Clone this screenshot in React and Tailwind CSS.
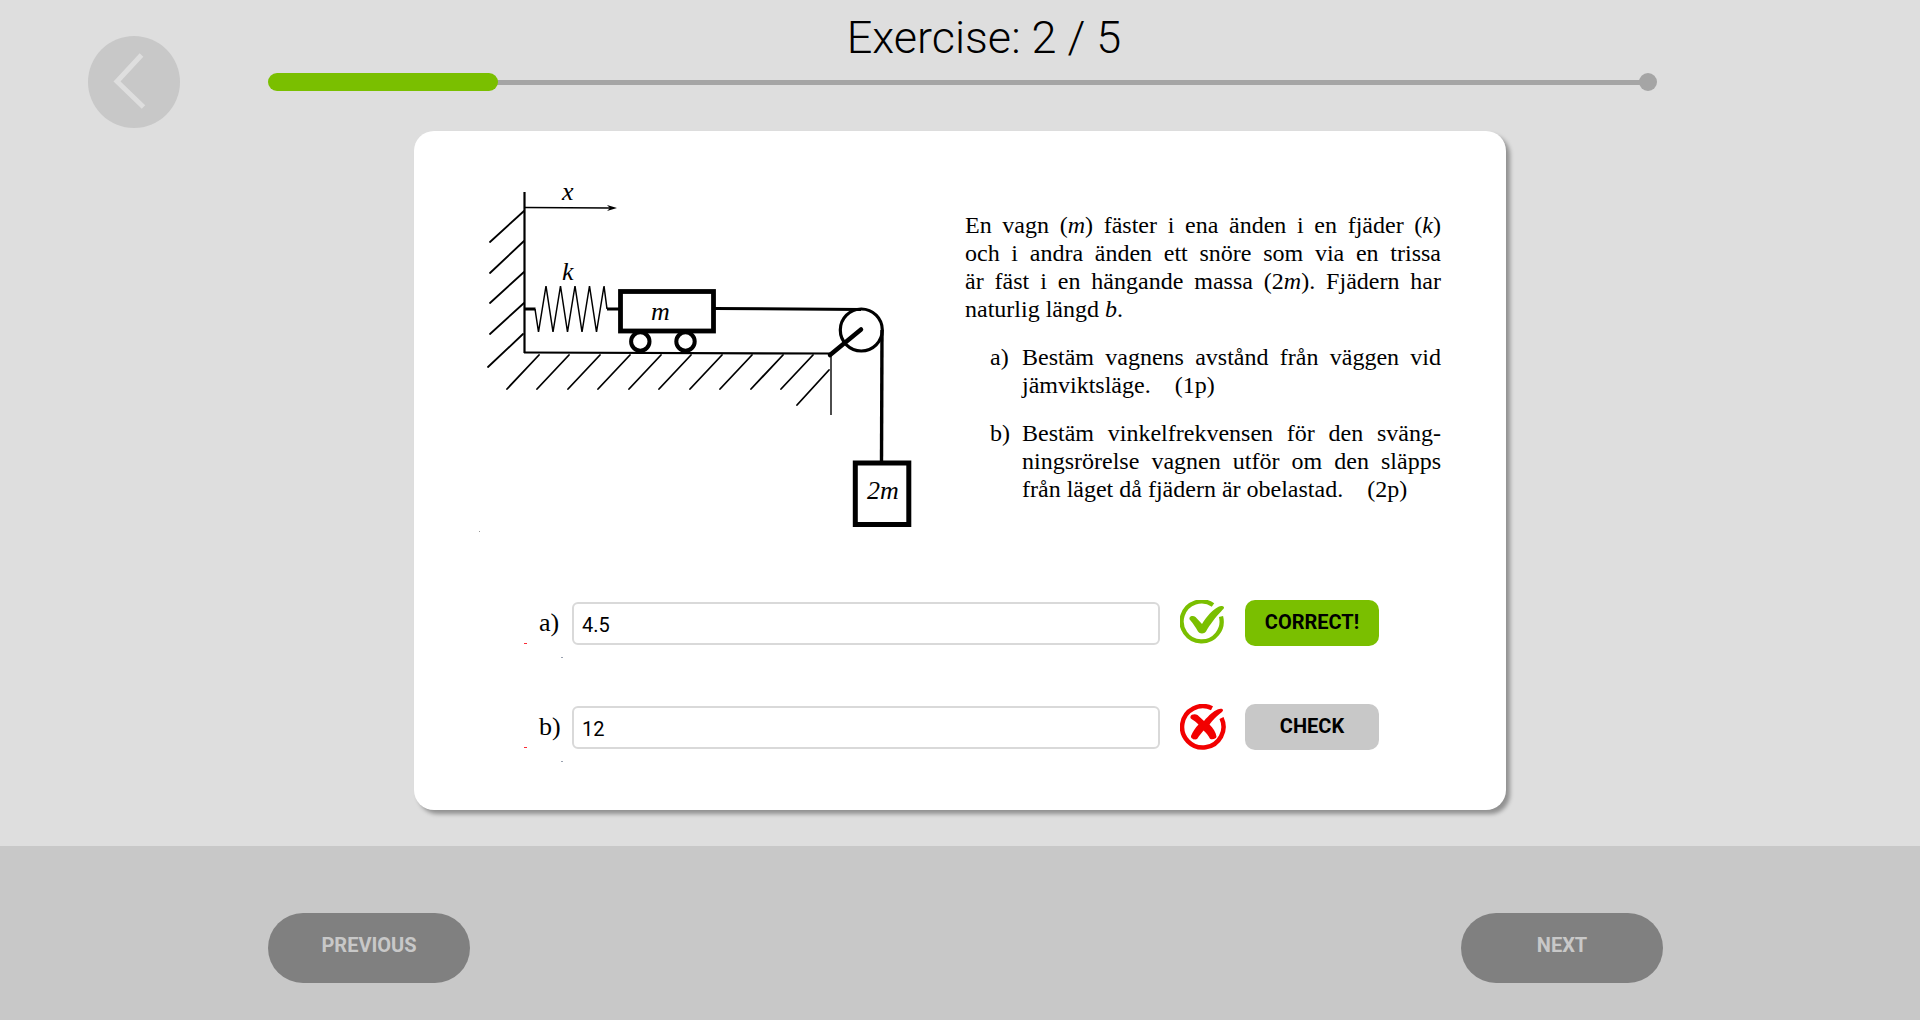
import React from "react";

const serif = "font-['Liberation_Serif',serif]";

const wallHatches = [
  [54, 41, 20, 72],
  [54, 71, 20, 103],
  [54, 102, 20, 133],
  [54, 133, 20, 164],
  [53, 164, 18, 197],
];

const groundHatches = [69, 99, 130, 160, 191, 221, 252, 282, 313, 343];

function SpringCartDiagram() {
  return (
    <svg
      viewBox="0 0 460 370"
      className="h-auto w-[460px] shrink-0"
      fill="none"
      stroke="#000"
      role="img"
      aria-label="Vagn med fjäder, trissa och hängande massa"
    >
      <path d="M54.5 22V183" strokeWidth="2.2" />
      <path d="M55 37.5L140 38" strokeWidth="1.4" />
      <path d="M147 38L137 35L140 38L137 41Z" fill="#000" stroke="none" />
      {wallHatches.map(([x1, y1, x2, y2]) => (
        <path key={y1} d={`M${x1} ${y1}L${x2} ${y2}`} strokeWidth="1.8" strokeLinecap="round" />
      ))}
      <path d="M55 139H65.500M137 139H150" strokeWidth="3" />
      <path
        d="M65 139L68.500 162L76 116L83 162L90.500 116L97.500 162L105 116L112 162L119.500 116L126.500 162L134 116L137 139"
        strokeWidth="1.5"
        strokeLinejoin="bevel"
      />
      <rect x="150.500" y="121.500" width="93" height="39.500" strokeWidth="4.800" />
      <circle cx="170.300" cy="171.500" r="9.200" strokeWidth="4" />
      <circle cx="215.500" cy="171.500" r="9.200" strokeWidth="4" />
      <path d="M54 182.500L361 183.500" strokeWidth="2.2" />
      {groundHatches.map((x) => (
        <path key={x} d={`M${x} 185L${x - 32} 219`} strokeWidth="1.8" strokeLinecap="round" />
      ))}
      <path d="M359 200L327 235" strokeWidth="1.8" strokeLinecap="round" />
      <path d="M361 185V245" strokeWidth="1.4" />
      <path d="M245 138.500L391 139.500" strokeWidth="3" />
      <circle cx="391.300" cy="160" r="21" strokeWidth="3.200" />
      <path d="M391 159.500L360 185" strokeWidth="4.500" strokeLinecap="round" />
      <path d="M412 160L411.500 292" strokeWidth="3.400" />
      <rect x="385.300" y="293" width="53.500" height="61.500" strokeWidth="5" />
      <rect x="9" y="361" width="1" height="1" fill="#999" stroke="none" />
      <g fill="#000" stroke="none" fontSize="26" fontStyle="italic" fontFamily="Liberation Serif, serif">
        <text x="92" y="30">x</text>
        <text x="92" y="110">k</text>
        <text x="181" y="150">m</text>
        <text x="397" y="329">2m</text>
      </g>
    </svg>
  );
}

function CorrectIcon() {
  return (
    <svg viewBox="0 0 46 46" className="h-[46px] w-[46px]" fill="#7abf00" role="img" aria-label="Rätt">
      <path d="M41 16.500A20 20 0 1 1 33 5" fill="none" stroke="#7abf00" strokeWidth="4.300" />
      <path d="M9.500 18C10 15.800 13.500 15.500 15.500 17L22 24C27 16 33 9.500 38.500 6.800C40.500 5.600 44 6 44 7.600C44 9 42.500 9.800 41.500 11C36 16.500 30 24.500 26 31.500C24.500 34 19.500 34 18 31.500C15.500 27 13 23.500 10.500 20.500C9.500 19.500 9.200 18.800 9.500 18Z" />
    </svg>
  );
}

function WrongIcon() {
  return (
    <svg viewBox="0 0 46 46" className="h-[46px] w-[46px]" fill="#f20000" role="img" aria-label="Fel">
      <path d="M41.500 14A20.700 20.700 0 1 1 32 4.300" fill="none" stroke="#f20000" strokeWidth="4.500" />
      <path d="M10.500 12.500C11 10 15.500 9.500 17.500 11L24 17C29 11 34 7 37.500 5.500C40 4.300 43.500 4.500 43 6.500C42.500 8 40.500 9 39.500 10C36 12.500 32.500 16.500 29.500 20.500C33 24 36 28.500 36.500 32.500C36.500 35 32 36 30 34.800C28.500 32 26 28.500 23.500 26.500C21 29.500 19 32 17.500 34.500C15.500 36.500 10.500 35 11 32C12.500 28 15.500 23.500 18.500 20.500C16.500 18.500 14 16.500 11.500 15C10.500 14.500 10.300 13.500 10.500 12.500Z" />
    </svg>
  );
}

function Lines({ lines, last }) {
  return (
    <>
      {lines.map((line, i) => (
        <span key={i} className="block whitespace-nowrap [text-align-last:justify]">
          {line}
        </span>
      ))}
      <span className="block whitespace-nowrap">{last}</span>
    </>
  );
}

function Problem() {
  return (
    <div className={`${serif} mt-[41px] flex-1 text-[24px] leading-[28px] text-black`}>
      <p>
        <Lines
          lines={[
            <>En vagn (<i>m</i>) fäster i ena änden i en fjäder (<i>k</i>)</>,
            "och i andra änden ett snöre som via en trissa",
            <>är fäst i en hängande massa (2<i>m</i>). Fjädern har</>,
          ]}
          last={<>naturlig längd <i>b</i>.</>}
        />
      </p>
      <ol>
        <li className="mt-5 flex">
          <span className="w-[57px] shrink-0 pl-[25px]">a)</span>
          <p className="flex-1">
            <Lines
              lines={["Bestäm vagnens avstånd från väggen vid"]}
              last={<>jämviktsläge.<span className="ml-6">(1p)</span></>}
            />
          </p>
        </li>
        <li className="mt-5 flex">
          <span className="w-[57px] shrink-0 pl-[25px]">b)</span>
          <p className="flex-1">
            <Lines
              lines={["Bestäm vinkelfrekvensen för den sväng-", "ningsrörelse vagnen utför om den släpps"]}
              last={<>från läget då fjädern är obelastad.<span className="ml-6">(2p)</span></>}
            />
          </p>
        </li>
      </ol>
    </div>
  );
}

function AnswerRow({ id, label, value, icon, button, buttonClass }) {
  return (
    <div className="flex h-[46px] items-center">
      <label htmlFor={id} className={`${serif} relative w-[33px] text-[26px] leading-[28px]`}>
        {label}
        <span className="absolute top-[34px] -left-[15px] h-px w-[3px] bg-red-500" />
        <span className="absolute top-[48px] left-[22px] h-px w-[2px] bg-gray-400" />
      </label>
      <input
        id={id}
        type="text"
        defaultValue={value}
        className="h-[43px] min-w-0 flex-1 rounded-md border-2 border-[#d9d9d9] bg-white px-2 pt-1 text-[20px] leading-[24px] text-black outline-none"
      />
      <div className="mr-[19px] ml-5">{icon}</div>
      <button type="button" className={`h-[46px] w-[134px] rounded-[10px] pb-0.5 text-[20px] font-bold text-black ${buttonClass}`}>
        {button}
      </button>
    </div>
  );
}

export default function App() {
  const current = 2;
  const total = 5;
  const navButton =
    "h-[70px] w-[202px] rounded-full bg-[#808080] pb-1.5 text-[20px] font-bold text-[#c8c8c8]";

  return (
    <div className="flex min-h-screen flex-col bg-[#dedede] font-['Roboto',sans-serif]">
      <header className="flex pr-[263px] pl-[88px]">
        <button
          type="button"
          aria-label="Back"
          className="mt-9 flex h-[92px] w-[92px] shrink-0 items-center justify-center rounded-full bg-[#c8c8c8]"
        >
          <svg viewBox="0 0 92 92" className="h-[92px] w-[92px]" fill="none" stroke="#dedede" strokeWidth="5">
            <path d="M53.500 19L29 45.500L55.500 71" />
          </svg>
        </button>
        <div className="ml-[88px] flex-1">
          <h1 className="h-[73px] pt-[10px] pl-[43px] text-center text-[45px] leading-[56px] font-light text-black">
            Exercise: {current} / {total}
          </h1>
          <div
            role="progressbar"
            aria-valuenow={current}
            aria-valuemin={1}
            aria-valuemax={total}
            className="flex h-[18px] items-center"
          >
            <div className="z-10 h-full w-[230px] rounded-full bg-[#7abf00]" />
            <div className="-ml-1 h-[5px] flex-1 bg-[#a5a5a5]" />
            <div className="-ml-1 h-full w-[18px] rounded-full bg-[#a5a5a5]" />
          </div>
        </div>
      </header>

      <main className="mx-auto mt-[3px] mb-9 w-full max-w-[1092px] rounded-[20px] bg-white pt-[39px] pb-[60px] shadow-[4px_4px_4px_rgba(0,0,0,0.35)]">
        <section className="flex items-start gap-[35px] pr-[65px] pl-14">
          <SpringCartDiagram />
          <Problem />
        </section>
        <form className="mt-[60px] flex flex-col gap-[58px] pr-[127px] pl-[125px]">
          <AnswerRow
            id="answer-a"
            label="a)"
            value="4.5"
            icon={<CorrectIcon />}
            button="CORRECT!"
            buttonClass="bg-[#7abf00]"
          />
          <AnswerRow
            id="answer-b"
            label="b)"
            value="12"
            icon={<WrongIcon />}
            button="CHECK"
            buttonClass="bg-[#c8c8c8]"
          />
        </form>
      </main>

      <footer className="flex flex-1 items-start justify-between bg-[#c8c8c8] pt-[67px] pr-[257px] pb-9 pl-[268px]">
        <button type="button" className={navButton}>PREVIOUS</button>
        <button type="button" className={navButton}>NEXT</button>
      </footer>
    </div>
  );
}
